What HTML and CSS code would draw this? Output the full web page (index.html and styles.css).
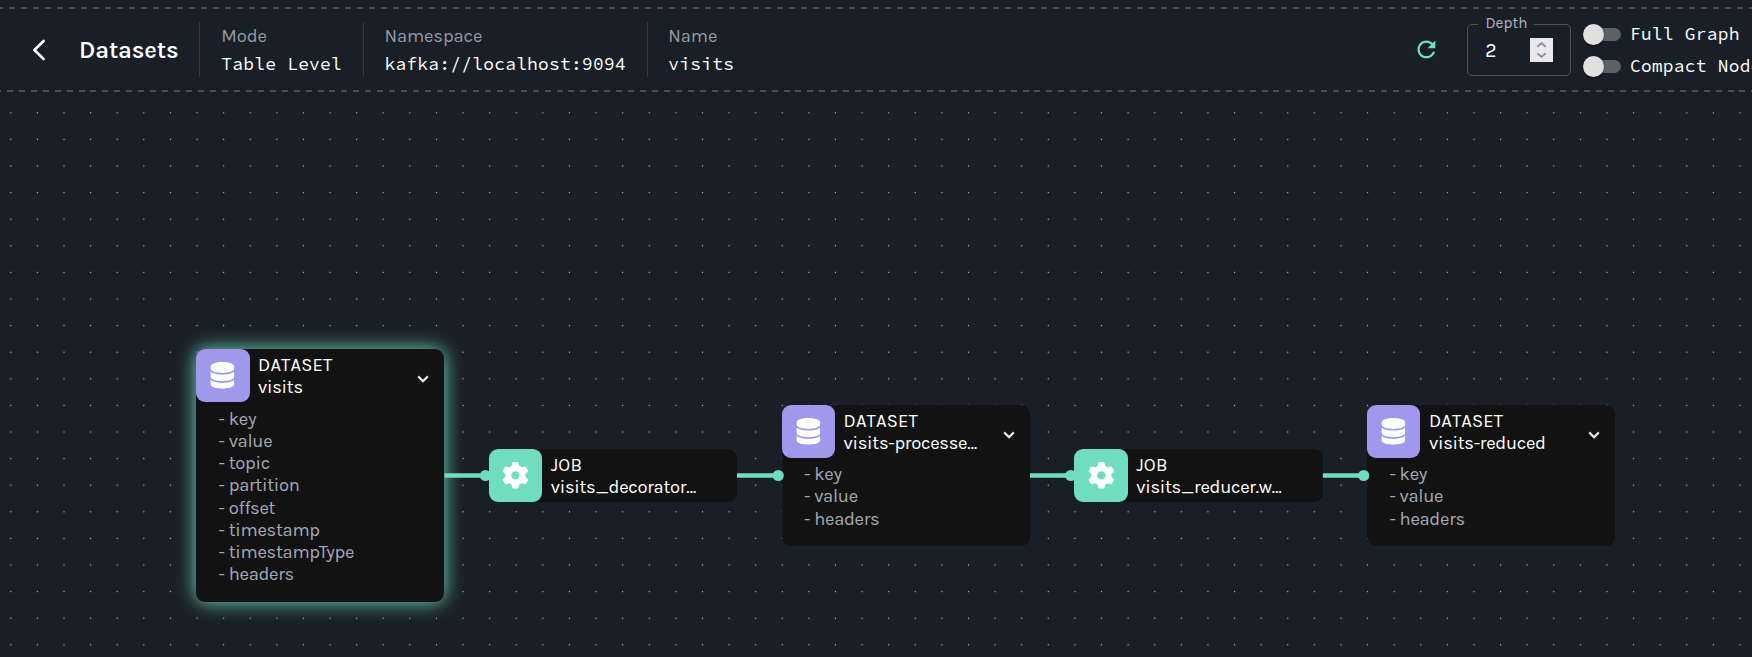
FILE: index.html
```html
<!DOCTYPE html>
<html lang="en">
<head>
<meta charset="utf-8">
<title>Datasets - visits</title>
<link rel="stylesheet" href="styles.css">
</head>
<body>
<svg class="defs" aria-hidden="true">
  <symbol id="database" viewBox="0 0 448 512"><path d="M448 80v48c0 44.2-100.3 80-224 80S0 172.2 0 128V80C0 35.8 100.3 0 224 0S448 35.8 448 80zM393.2 214.7c20.8-7.4 39.9-16.9 54.8-28.6V288c0 44.2-100.3 80-224 80S0 332.2 0 288V186.1c14.9 11.8 34 21.2 54.8 28.6C99.7 230.7 159.5 240 224 240s124.3-9.3 169.2-25.3zM0 346.1c14.9 11.8 34 21.2 54.8 28.6C99.7 390.7 159.5 400 224 400s124.3-9.3 169.2-25.3c20.8-7.4 39.9-16.9 54.8-28.6V432c0 44.2-100.3 80-224 80S0 476.2 0 432V346.1z"/></symbol>
  <symbol id="gear" viewBox="0 0 512 512"><path d="M495.9 166.6c3.2 8.7 .5 18.4-6.4 24.6l-43.3 39.4c1.1 8.3 1.7 16.8 1.7 25.4s-.6 17.1-1.7 25.4l43.3 39.4c6.9 6.2 9.6 15.9 6.4 24.6c-4.4 11.9-9.7 23.3-15.8 34.3l-4.7 8.1c-6.6 11-14 21.4-22.1 31.2c-5.9 7.2-15.7 9.6-24.5 6.8l-55.7-17.7c-13.4 10.3-28.2 18.9-44 25.4l-12.5 57.1c-2 9.1-9 16.3-18.2 17.8c-13.8 2.3-28 3.5-42.5 3.5s-28.7-1.2-42.5-3.5c-9.2-1.5-16.2-8.7-18.2-17.8l-12.5-57.1c-15.8-6.5-30.6-15.1-44-25.4L83.1 425.9c-8.8 2.8-18.6 .3-24.5-6.8c-8.1-9.8-15.5-20.2-22.1-31.2l-4.7-8.1c-6.1-11-11.4-22.4-15.8-34.3c-3.2-8.7-.5-18.4 6.4-24.6l43.3-39.4C64.6 273.1 64 264.6 64 256s.6-17.1 1.7-25.4L22.4 191.2c-6.9-6.2-9.6-15.9-6.4-24.6c4.4-11.9 9.7-23.3 15.8-34.3l4.7-8.1c6.6-11 14-21.4 22.1-31.2c5.9-7.2 15.7-9.6 24.5-6.8l55.7 17.7c13.4-10.3 28.2-18.9 44-25.4l12.5-57.1c2-9.1 9-16.3 18.2-17.8C227.3 1.2 241.5 0 256 0s28.7 1.2 42.5 3.5c9.2 1.5 16.2 8.7 18.2 17.8l12.5 57.1c15.8 6.5 30.6 15.1 44 25.4l55.7-17.7c8.8-2.8 18.6-.3 24.5 6.8c8.1 9.8 15.5 20.2 22.1 31.2l4.7 8.1c6.1 11 11.4 22.4 15.8 34.3zM256 336a80 80 0 1 0 0-160 80 80 0 1 0 0 160z"/></symbol>
  <symbol id="chevron" viewBox="0 0 12 8"><path d="M1.2 1.4 6 6.2 10.8 1.4" fill="none" stroke="#e8e8ea" stroke-width="2.2"/></symbol>
</svg>

<header class="bar">
  <svg class="back" width="14" height="22" viewBox="0 0 14 22"><path d="M11.6 2 2.4 11 11.6 20"/></svg>
  <h1 class="title">Datasets</h1>
  <div class="facts">
    <div class="fact"><span class="label">Mode</span><span class="value">Table Level</span></div>
    <div class="fact"><span class="label">Namespace</span><span class="value">kafka://localhost:9094</span></div>
    <div class="fact"><span class="label">Name</span><span class="value">visits</span></div>
  </div>
  <div class="controls">
    <svg class="refresh" viewBox="0 0 24 24"><path d="M17.65 6.35C16.2 4.9 14.21 4 12 4c-4.42 0-7.99 3.58-7.99 8s3.57 8 7.99 8c3.73 0 6.84-2.55 7.73-6h-2.08c-.82 2.33-3.04 4-5.65 4-3.31 0-6-2.69-6-6s2.69-6 6-6c1.66 0 3.14.69 4.22 1.78L13 11h7V4l-2.35 2.35z"/></svg>
    <div class="depth">
      <span class="depth-label">Depth</span>
      <span class="depth-value">2</span>
      <svg class="spinner" width="23" height="24" viewBox="0 0 23 24"><path d="M7.3 8.8 11.5 5l4.2 3.8M7.3 15.2l4.2 3.8 4.2-3.8"/></svg>
    </div>
    <div class="switches">
      <div class="switch-row"><span class="switch"><i class="thumb"></i></span><span class="value">Full Graph</span></div>
      <div class="switch-row"><span class="switch"><i class="thumb"></i></span><span class="value">Compact Nodes</span></div>
    </div>
  </div>
</header>

<main class="canvas">
  <svg class="layer" width="1752" height="565">
    <defs><pattern id="dots" x="-2.5" y="7.5" width="26.603" height="26.6" patternUnits="userSpaceOnUse"><circle cx="13.3" cy="13.3" r=".66" fill="#b8bcc4"/></pattern></defs>
    <rect width="1752" height="565" fill="url(#dots)"/>
  </svg>

  <article class="node dataset selected n1">
    <div class="head"><div class="badge"><svg><use href="#database"/></svg></div><div class="names"><span class="kind">DATASET</span><span>visits</span></div><svg class="chev"><use href="#chevron"/></svg></div>
    <ul class="fields"><li>- key</li><li>- value</li><li>- topic</li><li>- partition</li><li>- offset</li><li>- timestamp</li><li>- timestampType</li><li>- headers</li></ul>
  </article>
  <article class="node job n2">
    <div class="head"><div class="badge"><svg><use href="#gear"/></svg></div><div class="names"><span class="kind">JOB</span><span>visits_decorator…</span></div></div>
  </article>
  <article class="node dataset n3">
    <div class="head"><div class="badge"><svg><use href="#database"/></svg></div><div class="names"><span class="kind">DATASET</span><span>visits-processe…</span></div><svg class="chev"><use href="#chevron"/></svg></div>
    <ul class="fields"><li>- key</li><li>- value</li><li>- headers</li></ul>
  </article>
  <article class="node job n4">
    <div class="head"><div class="badge"><svg><use href="#gear"/></svg></div><div class="names"><span class="kind">JOB</span><span>visits_reducer.w…</span></div></div>
  </article>
  <article class="node dataset n5">
    <div class="head"><div class="badge"><svg><use href="#database"/></svg></div><div class="names"><span class="kind">DATASET</span><span>visits-reduced</span></div><svg class="chev"><use href="#chevron"/></svg></div>
    <ul class="fields"><li>- key</li><li>- value</li><li>- headers</li></ul>
  </article>

  <svg class="layer edges" width="1752" height="565">
    <path d="M444.5 383.5H485.5M737 383.5H778.2M1030 383.5H1070.8M1322.8 383.5H1363.7"/>
    <circle cx="485.5" cy="383.5" r="5.6"/><circle cx="778.2" cy="383.5" r="5.6"/><circle cx="1070.8" cy="383.5" r="5.6"/><circle cx="1363.7" cy="383.5" r="5.6"/>
  </svg>
</main>
</body>
</html>
```
FILE: styles.css
```css
* { box-sizing: border-box; margin: 0; padding: 0; }

body {
  width: 1752px;
  height: 657px;
  padding-top: 7px;
  overflow: hidden;
  background: #191f26;
  color: #fff;
  font-family: Karla, "Noto Sans CJK JP", sans-serif;
  font-size: 18.4px;
  letter-spacing: -.29px;
}

.defs { display: none; }
span, li { white-space: pre; }

/* Top bar */
.bar {
  display: flex;
  align-items: center;
  height: 85px;
  padding-left: 32px;
  background:
    repeating-linear-gradient(90deg, #454d5a 0 6px, transparent 6px 12px) -3px 0 / 1767px 2px no-repeat,
    repeating-linear-gradient(90deg, #454d5a 0 6px, transparent 6px 11.949px) -5.1px 83px / 1767px 2px no-repeat;
}
.back { fill: none; stroke: #fff; stroke-width: 2.6; stroke-linecap: round; stroke-linejoin: round; }
.title {
  width: 120px;
  margin: 1px 0 0 33px;
  font-size: 24px;
  line-height: 28px;
  font-weight: 600;
  letter-spacing: -.12px;
}
.facts { display: flex; }
.fact {
  display: flex;
  flex-direction: column;
  gap: 4px;
  height: 55px;
  padding: 2px 20.8px 0 20.6px;
  border-left: 1px solid #343a44;
}
.fact:first-child { padding-left: 21.3px; }
.label { color: #959aa6; line-height: 24px; letter-spacing: -.1px; }
.value {
  font-family: "Source Code Pro", "Noto Sans Mono", "Liberation Mono", monospace;
  font-size: 17.87px;
  line-height: 24px;
  letter-spacing: .26px;
}

.controls { display: flex; flex: none; align-items: center; margin-left: auto; margin-right: -20.6px; }
.refresh { width: 26.8px; height: 26.8px; margin-right: 28px; fill: #71ddbf; }
.depth {
  position: relative;
  display: flex;
  align-items: center;
  justify-content: space-between;
  width: 104px;
  height: 52px;
  margin-right: 11.5px;
  padding: 0 17px 0 16.8px;
  border: 1px solid #4d525a;
  border-radius: 5px;
}
.depth-label {
  position: absolute;
  left: 10px;
  top: -12px;
  width: 56px;
  padding-left: 7px;
  background: #191f26;
  color: #b0b4be;
  font-size: 15.4px;
  line-height: 20px;
  letter-spacing: 0;
}
.depth-value { padding-top: 2px; font-size: 19.4px; }
.spinner { background: #e9e9ed; fill: none; stroke: #8f8f9d; stroke-width: 2; }

.switches { display: flex; flex-direction: column; gap: 8px; margin-top: 1px; }
.switch-row { display: flex; align-items: center; height: 24px; gap: 8.5px; }
.switch { position: relative; display: flex; align-items: center; width: 38.5px; height: 21px; }
.switch::before { content: ""; width: 36px; height: 13px; margin-left: 2.5px; border-radius: 7px; background: #5e6267; }
.thumb { position: absolute; left: 0; top: 0; width: 21px; height: 21px; border-radius: 50%; background: #e0e0e0; box-shadow: 0 1px 3px rgba(0, 0, 0, .4); }

/* Lineage graph */
.canvas { position: relative; height: 565px; overflow: hidden; }
.layer { position: absolute; left: 0; top: 0; }
.edges path { stroke: #71ddbf; stroke-width: 4.47; fill: none; }
.edges circle { fill: #71ddbf; }

.node { position: absolute; width: 248.2px; border-radius: 9px; background: #121212; }
.selected { box-shadow: 0 0 19px #71ddbf; }
.n1 { left: 196.2px; top: 257px; }
.n2 { left: 488.9px; top: 357px; }
.n3 { left: 781.7px; top: 312.6px; }
.n4 { left: 1074.4px; top: 357px; }
.n5 { left: 1367.1px; top: 312.6px; }

.head { display: flex; height: 53.4px; padding-right: 15.2px; }
.badge { display: flex; align-items: center; justify-content: center; width: 53.4px; border-radius: 9px; }
.dataset .badge { background: #9f98ed; }
.job .badge { background: #71ddbf; }
.badge svg { width: 26.8px; height: 26.8px; fill: #fff; }
.names { display: flex; flex: 1; flex-direction: column; padding: 5px 0 0 8.5px; line-height: 22.3px; }
.kind { font-kerning: none; letter-spacing: .16px; }
.chev { width: 12px; height: 8px; margin-top: 26px; }
.fields { padding: 5.2px 0 16px 22.3px; list-style: none; color: #a5a9b6; line-height: 22.25px; }
```
